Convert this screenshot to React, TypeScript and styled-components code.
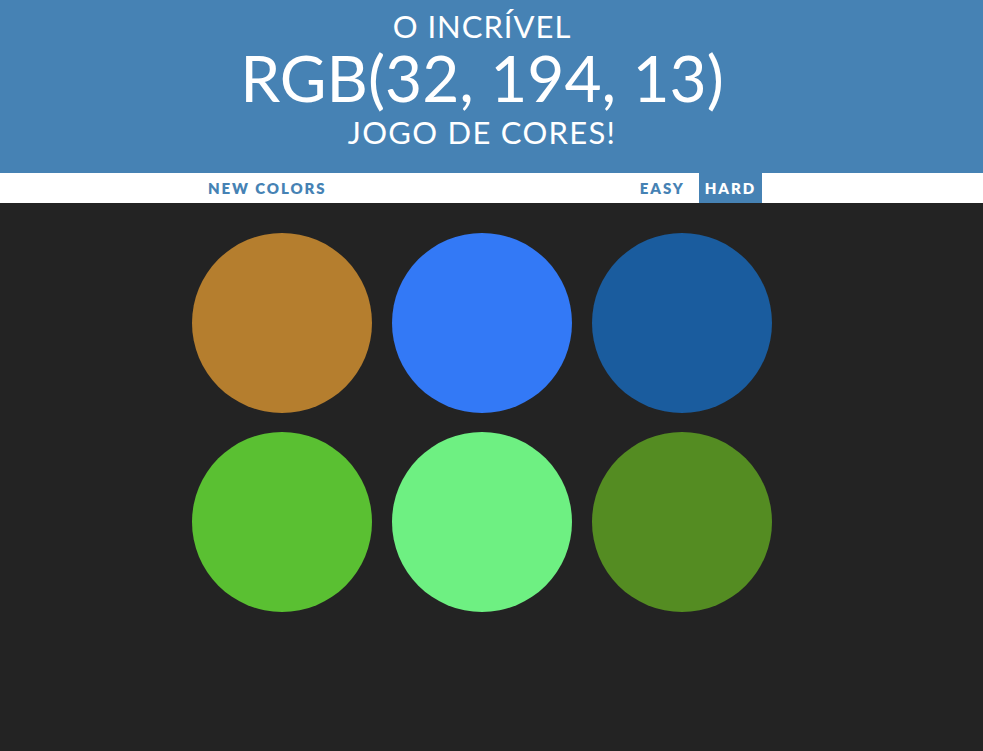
import React from "react";
import styled, { createGlobalStyle } from "styled-components";

const Global = createGlobalStyle`
  html, body { margin: 0; padding: 0; background: #232323; }
  body { font-family: Lato, "Open Sans", sans-serif; }
`;

const Page = styled.div`
  min-height: 751px;
  background: #232323;
`;

const Header = styled.h1`
  margin: 0;
  padding: 8px 19px 20px 0;
  background: steelblue;
  color: #fff;
  text-align: center;
  font-weight: 400;
  text-transform: uppercase;
  font-family: Lato, "Open Sans", sans-serif;
`;

const Line = styled.div<{ $size: number; $lh: number; $ls?: number }>`
  font-size: ${(p) => p.$size}px;
  line-height: ${(p) => p.$lh}px;
  letter-spacing: ${(p) => p.$ls ?? 0}px;
  white-space: nowrap;
`;

const Stripe = styled.div`
  background: #fff;
  height: 30px;
  padding-right: 19px;
`;

const StripeInner = styled.div`
  max-width: 600px;
  margin: 0 auto;
  padding: 0 20px;
  box-sizing: border-box;
  height: 100%;
  display: flex;
  align-items: stretch;
`;

const ModeGroup = styled.div`
  display: flex;
  gap: 8px;
`;

const Button = styled.button<{ $selected?: boolean }>`
  border: none;
  background: ${(p) => (p.$selected ? "steelblue" : "none")};
  color: ${(p) => (p.$selected ? "#fff" : "steelblue")};
  text-transform: uppercase;
  font-family: Lato, "Open Sans", sans-serif;
  font-weight: 800;
  font-size: 15px;
  letter-spacing: 1.9px;
  padding: 0 6px;
  height: 100%;
  outline: none;
  cursor: pointer;
`;

const Spacer = styled.span`
  flex: 1;
`;

const Container = styled.div`
  padding-right: 19px;
`;

const Grid = styled.div`
  max-width: 600px;
  margin: 20px auto;
  display: grid;
  grid-template-columns: repeat(3, 180px);
  column-gap: 20px;
  row-gap: 19px;
  padding: 10px;
  box-sizing: border-box;
`;

const Square = styled.div<{ $color: string }>`
  width: 180px;
  height: 180px;
  border-radius: 50%;
  background: ${(p) => p.$color};
`;

const colors = ["#b57e2e", "#3379f6", "#1a5c9e", "#5ac032", "#6ef082", "#548c22"];

export default function App() {
  return (
    <Page>
      <Global />
      <Header>
        <Line $size={31} $lh={37} $ls={1}>O Incrível</Line>
        <Line $size={64} $lh={66}>RGB(32, 194, 13)</Line>
        <Line $size={31} $lh={42} $ls={1.3}>Jogo de Cores!</Line>
      </Header>
      <Stripe>
        <StripeInner>
          <Button>New Colors</Button>
          <Spacer />
          <ModeGroup>
            <Button>Easy</Button>
            <Button $selected>Hard</Button>
          </ModeGroup>
        </StripeInner>
      </Stripe>
      <Container>
        <Grid>
          {colors.map((c, i) => (
            <Square key={i} $color={c} />
          ))}
        </Grid>
      </Container>
    </Page>
  );
}
